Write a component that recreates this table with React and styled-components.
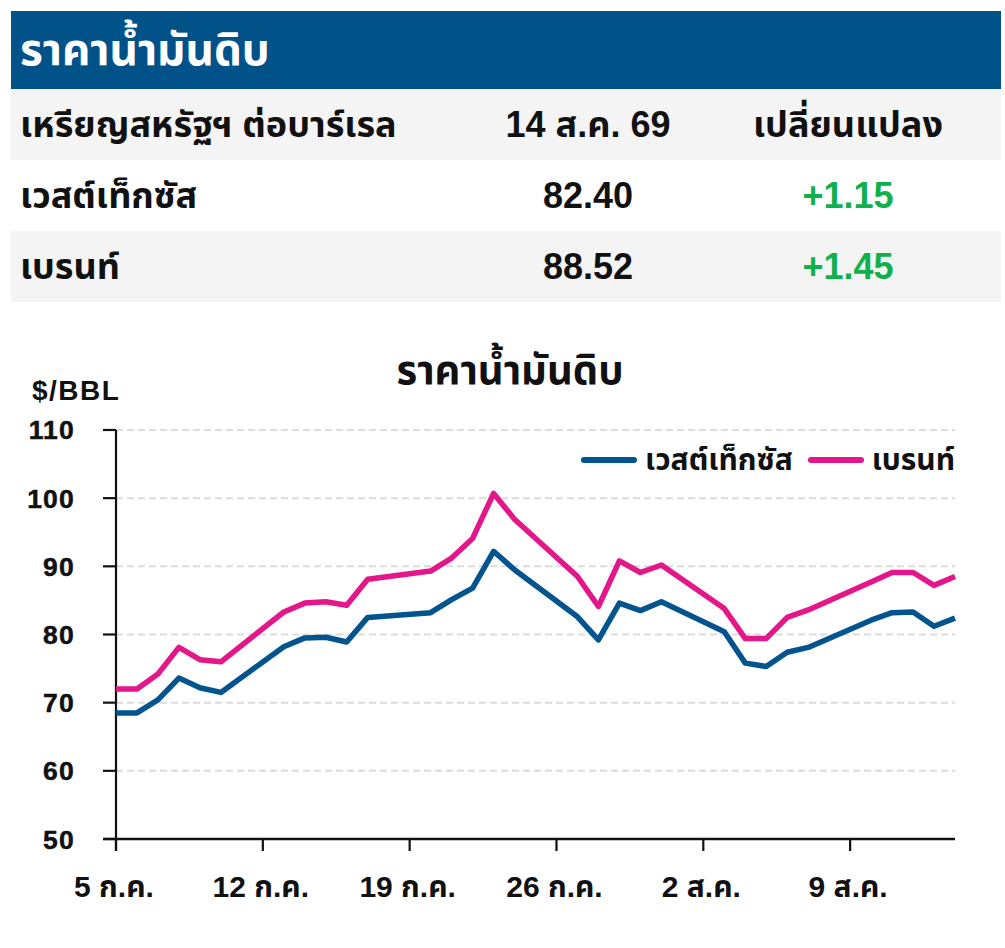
import React from 'react';
import styled, { createGlobalStyle } from 'styled-components';

const FONT = `"Liberation Sans", "Noto Sans Thai", "Noto Sans", "DejaVu Sans", sans-serif`;

const GlobalStyle = createGlobalStyle`
  html, body { margin: 0; padding: 0; background: #fff; }
  body { font-family: ${FONT}; color: #111; }
`;

const Page = styled.div`
  width: 1005px;
  min-height: 948px;
  background: #fff;
`;

const Table = styled.div`
  width: 990px;
  margin: 11px 0 0 11px;
`;

const TitleBar = styled.div`
  height: 78px;
  display: flex;
  align-items: center;
  padding-left: 9px;
  background: #02528a;
  color: #fff;
  font-size: 44px;
  line-height: 50px;
  font-weight: 700;
`;

const Row = styled.div`
  display: grid;
  grid-template-columns: 470px 214px 306px;
  height: 71px;
  align-items: center;
  background: ${(p) => (p.$shaded ? '#f4f4f4' : '#fff')};
`;

const Cell = styled.div`
  font-size: 36px;
  line-height: 44px;
  font-weight: 700;
  padding-left: ${(p) => (p.$align === 'left' ? '9px' : '0')};
  text-align: ${(p) => p.$align || 'center'};
  color: ${(p) => (p.$up ? '#10b04c' : '#111')};
  white-space: nowrap;
`;

const ChartHead = styled.div`
  padding-top: 46px;
`;

const ChartTitle = styled.div`
  padding-left: 15px;
  text-align: center;
  font-size: 40px;
  line-height: 44px;
  font-weight: 700;
`;

const UnitLabel = styled.div`
  margin-top: -15px;
  padding-left: 32px;
  font-size: 28px;
  line-height: 28px;
  font-weight: 700;
  letter-spacing: 1.5px;
`;

const ChartFrame = styled.div`
  position: relative;
  width: 1005px;
`;

const Legend = styled.div`
  position: absolute;
  top: 37px;
  right: 50px;
  display: flex;
  align-items: center;
  gap: 15px;
`;

const LegendItem = styled.div`
  display: flex;
  align-items: center;
  gap: 8px;
  font-size: 30px;
  font-weight: 700;
  line-height: 36px;
`;

const Swatch = styled.span`
  display: block;
  width: 56px;
  height: 6px;
  border-radius: 3px;
  background: ${(p) => p.$color};
`;

const Plot = styled.svg`
  display: block;
`;

const BLUE = '#02548f';
const PINK = '#e3168a';

const wti = [
  [0, 68.5], [1, 68.5], [2, 70.4], [3, 73.6], [4, 72.2], [5, 71.5],
  [8, 78.2], [9, 79.5], [10, 79.6], [11, 78.9], [12, 82.5],
  [15, 83.2], [16, 85.1], [17, 86.8], [18, 92.2], [19, 89.5],
  [22, 82.6], [23, 79.2], [24, 84.6], [25, 83.5], [26, 84.8],
  [29, 80.4], [30, 75.8], [31, 75.3], [32, 77.4], [33, 78.1],
  [36, 82.1], [37, 83.2], [38, 83.3], [39, 81.2], [40, 82.4],
];

const brent = [
  [0, 72.0], [1, 72.0], [2, 74.2], [3, 78.1], [4, 76.3], [5, 76.0],
  [8, 83.3], [9, 84.6], [10, 84.8], [11, 84.3], [12, 88.1],
  [15, 89.3], [16, 91.2], [17, 94.1], [18, 100.7], [19, 96.9],
  [22, 88.5], [23, 84.1], [24, 90.8], [25, 89.1], [26, 90.2],
  [29, 83.8], [30, 79.4], [31, 79.4], [32, 82.5], [33, 83.6],
  [36, 87.7], [37, 89.1], [38, 89.1], [39, 87.2], [40, 88.5],
];

const X0 = 116;
const X1 = 955;
const Y_BASE = 839;
const DAY = (X1 - X0) / 40;
const UNIT = 6.817;

const sx = (d) => X0 + d * DAY;
const sy = (v) => Y_BASE - (v - 50) * UNIT;
const toPath = (pts) =>
  pts.map(([d, v], i) => `${i ? 'L' : 'M'}${sx(d).toFixed(1)} ${sy(v).toFixed(1)}`).join(' ');

const yTicks = [50, 60, 70, 80, 90, 100, 110];
const xTicks = [
  { d: 0, label: '5 ก.ค.' },
  { d: 7, label: '12 ก.ค.' },
  { d: 14, label: '19 ก.ค.' },
  { d: 21, label: '26 ก.ค.' },
  { d: 28, label: '2 ส.ค.' },
  { d: 35, label: '9 ส.ค.' },
];

const rows = [
  { name: 'เวสต์เท็กซัส', price: '82.40', change: '+1.15' },
  { name: 'เบรนท์', price: '88.52', change: '+1.45' },
];

function PriceChart() {
  return (
    <ChartFrame>
      <Plot width="1005" height="543" viewBox="0 405 1005 543">
        {yTicks.slice(1).map((v) => (
          <line
            key={`g${v}`}
            x1={X0}
            x2={X1}
            y1={sy(v)}
            y2={sy(v)}
            stroke="#dcdcdc"
            strokeWidth="2"
            strokeDasharray="7 4"
          />
        ))}
        {yTicks.map((v) => (
          <g key={`y${v}`}>
            <line x1="103" x2={X0} y1={sy(v)} y2={sy(v)} stroke="#111" strokeWidth="2.2" />
            <text
              x="75"
              y={sy(v) + 9.5}
              textAnchor="end"
              fontFamily={FONT}
              fontWeight="700"
              fontSize="26.5"
              letterSpacing="1.2"
              fill="#111"
              stroke="#111"
              strokeWidth="0.5"
            >
              {v}
            </text>
          </g>
        ))}
        <line x1={X0} x2={X0} y1={sy(110)} y2={Y_BASE + 12} stroke="#111" strokeWidth="2.2" />
        <line x1="103" x2={X1} y1={Y_BASE} y2={Y_BASE} stroke="#111" strokeWidth="2.5" />
        {xTicks.map((t) => (
          <g key={t.label}>
            <line x1={sx(t.d)} x2={sx(t.d)} y1={Y_BASE} y2={Y_BASE + 12} stroke="#111" strokeWidth="2.2" />
            <text
              x={sx(t.d) - 2}
              y="897"
              textAnchor="middle"
              fontFamily={FONT}
              fontWeight="700"
              fontSize="30"
              fill="#111"
            >
              {t.label}
            </text>
          </g>
        ))}
        <path d={toPath(wti)} fill="none" stroke={BLUE} strokeWidth="5.5" strokeLinejoin="round" />
        <path d={toPath(brent)} fill="none" stroke={PINK} strokeWidth="5.5" strokeLinejoin="round" />
      </Plot>
      <Legend>
        <LegendItem>
          <Swatch $color={BLUE} />
          เวสต์เท็กซัส
        </LegendItem>
        <LegendItem>
          <Swatch $color={PINK} />
          เบรนท์
        </LegendItem>
      </Legend>
    </ChartFrame>
  );
}

export default function App() {
  return (
    <Page>
      <GlobalStyle />
      <Table>
        <TitleBar>ราคาน้ำมันดิบ</TitleBar>
        <Row $shaded>
          <Cell $align="left">เหรียญสหรัฐฯ ต่อบาร์เรล</Cell>
          <Cell>14 ส.ค. 69</Cell>
          <Cell>เปลี่ยนแปลง</Cell>
        </Row>
        {rows.map((r, i) => (
          <Row key={r.name} $shaded={i % 2 === 1}>
            <Cell $align="left">{r.name}</Cell>
            <Cell>{r.price}</Cell>
            <Cell $up>{r.change}</Cell>
          </Row>
        ))}
      </Table>
      <ChartHead>
        <ChartTitle>ราคาน้ำมันดิบ</ChartTitle>
        <UnitLabel>$/BBL</UnitLabel>
      </ChartHead>
      <PriceChart />
    </Page>
  );
}
